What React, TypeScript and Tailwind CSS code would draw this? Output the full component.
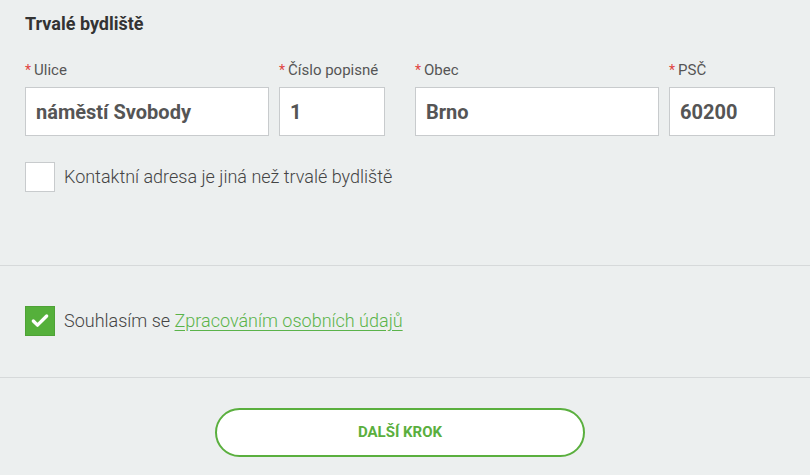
import { Check } from "lucide-react";

function Field({ label, value, width }: { label: string; value: string; width: string }) {
  return (
    <div className={`flex flex-col ${width}`}>
      <label className="text-[15px] leading-[20px] text-[#555] mb-[7px]">
        <span className="text-[#e0443f] text-[14px] mr-[3px]">*</span>
        {label}
      </label>
      <div className="h-[49px] bg-white border border-[#c8cbcd] flex items-center px-[10px]">
        <span className="text-[20px] font-bold text-[#555]">{value}</span>
      </div>
    </div>
  );
}

export default function App() {
  return (
    <div className="w-[810px] h-[475px] bg-[#ecefef] font-['Roboto',sans-serif] overflow-hidden">
      {/* Address */}
      <section className="px-[25px] pt-[12px] pb-[73px] border-b border-[#d6d9da]">
        <h2 className="text-[18px] leading-[24px] font-bold text-[#333]">Trvalé bydliště</h2>

        <div className="mt-[24px] flex gap-[30px]">
          <div className="flex gap-[10px]">
            <Field label="Ulice" value="náměstí Svobody" width="w-[244px]" />
            <Field label="Číslo popisné" value="1" width="w-[106px]" />
          </div>
          <div className="flex gap-[10px]">
            <Field label="Obec" value="Brno" width="w-[244px]" />
            <Field label="PSČ" value="60200" width="w-[106px]" />
          </div>
        </div>

        <div className="mt-[26px] flex items-center gap-[9px]">
          <div className="w-[30px] h-[30px] bg-white border border-[#c8cbcd]"></div>
          <span className="text-[18px] leading-[24px] font-light text-[#444]">Kontaktní adresa je jiná než trvalé bydliště</span>
        </div>
      </section>

      {/* Consent */}
      <section className="px-[25px] pt-[40px] pb-[41px] border-b border-[#d6d9da]">
        <div className="flex items-center gap-[9px]">
          <div className="w-[30px] h-[30px] bg-[#55b03b] border border-[#4ea236] flex items-center justify-center">
            <Check className="w-[20px] h-[20px] text-white" strokeWidth={4} />
          </div>
          <span className="text-[18px] leading-[24px] font-light text-[#444]">
            Souhlasím se{" "}
            <a href="#" className="text-[#5ab34a] underline underline-offset-[3px]">
              Zpracováním osobních údajů
            </a>
          </span>
        </div>
      </section>

      <div className="flex justify-center pr-[10px] pt-[30px]">
        <button className="w-[370px] h-[49px] rounded-full bg-white border-[2.5px] border-[#5aaf3e] text-[15px] font-bold text-[#5aaf3e]">
          DALŠÍ KROK
        </button>
      </div>
    </div>
  );
}
